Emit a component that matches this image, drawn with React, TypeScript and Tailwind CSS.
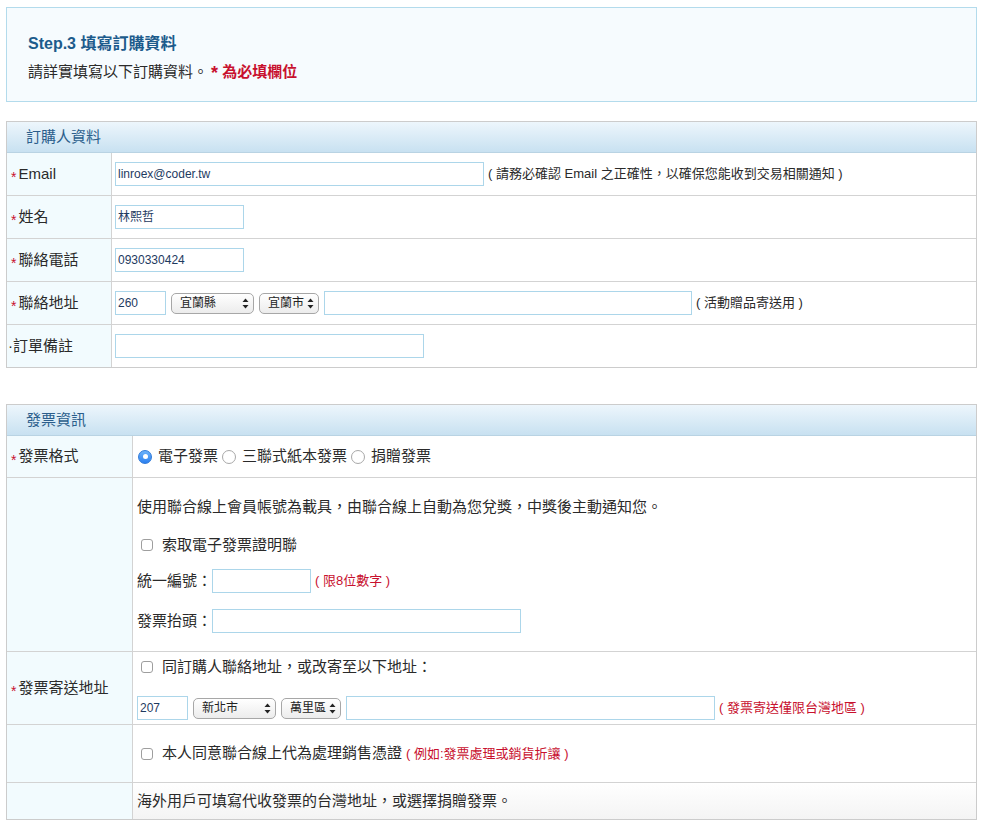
import React from "react";

const Star = () => <span className="text-[#c8102e] text-[14px] leading-none mr-[2px] relative top-[3px]">*</span>;

function Arrows() {
  return (
    <svg width="7" height="11" viewBox="0 0 7 11" className="shrink-0">
      <path d="M3.5 0.5 L6.5 4 L0.5 4 Z" fill="#222" />
      <path d="M3.5 10.5 L6.5 7 L0.5 7 Z" fill="#222" />
    </svg>
  );
}

function Sel({ text, className }: { text: string; className: string }) {
  return (
    <div
      className={
        "h-[21px] rounded-[5px] border border-[#a7a7a7] bg-gradient-to-b from-white to-[#ececec] flex items-center justify-between pl-[8px] pr-[4px] text-[12px] text-[#222] shrink-0 " +
        className
      }
    >
      <span>{text}</span>
      <Arrows />
    </div>
  );
}

function Inp({ value, className }: { value?: string; className: string }) {
  return (
    <div
      className={
        "h-[24px] border border-[#acd6ea] bg-white flex items-center px-[2px] text-[12px] text-[#1e3a5f] shrink-0 " +
        className
      }
    >
      {value}
    </div>
  );
}

function Check() {
  return <span className="inline-block w-[12px] h-[12px] rounded-[3px] border border-[#9e9e9e] bg-white mr-[9px] shrink-0" />;
}

function Radio({ on }: { on?: boolean }) {
  return on ? (
    <span className="inline-flex items-center justify-center w-[14px] h-[14px] rounded-full bg-gradient-to-b from-[#6cb3fa] to-[#2a7ff0] border border-[#2f7ad9] mr-[6px] shrink-0">
      <span className="w-[5px] h-[5px] rounded-full bg-white" />
    </span>
  ) : (
    <span className="inline-block w-[14px] h-[14px] rounded-full border border-[#a8a8a8] bg-white mr-[6px] shrink-0" />
  );
}

function Header({ title }: { title: string }) {
  return (
    <div className="h-[31px] bg-gradient-to-b from-[#edf6fc] to-[#c8e1f1] border-b border-[#b9d3e3] flex items-center pl-[19px] text-[15px] text-[#2b5e8c]">
      {title}
    </div>
  );
}

export default function App() {
  return (
    <div className="w-[983px] h-[825px] bg-white px-[6px] pt-[7px] font-['Liberation_Sans','Noto_Sans_CJK_TC',sans-serif] text-[#2a2a2a] overflow-hidden">
      {/* Step box */}
      <div className="h-[95px] border border-[#b3dbec] bg-[#f6fbfe] pl-[21px] pt-[26px]">
        <div className="text-[16px] font-bold text-[#1c5b8c] leading-[20px]">Step.3 填寫訂購資料</div>
        <div className="text-[15px] leading-[20px] mt-[7px]">
          請詳實填寫以下訂購資料。
          <span className="text-[#c8102e] font-bold ml-[3px]">
            <span className="text-[18px] relative top-[2px]">*</span> 為必填欄位
          </span>
        </div>
      </div>

      {/* Section 1 */}
      <div className="mt-[19px] border border-[#cccccc]">
        <Header title="訂購人資料" />
        <div className="grid grid-cols-[105px_1fr] text-[15px]">
          <div className="h-[43px] bg-[#f2fbfe] border-r border-b border-[#d3d3d3] flex items-center pl-[4px]">
            <Star />Email
          </div>
          <div className="h-[43px] border-b border-[#d3d3d3] flex items-center pl-[3px]">
            <Inp value="linroex@coder.tw" className="w-[369px]" />
            <span className="text-[13px] ml-[4px]">( 請務必確認 Email 之正確性，以確保您能收到交易相關通知 )</span>
          </div>

          <div className="h-[43px] bg-[#f2fbfe] border-r border-b border-[#d3d3d3] flex items-center pl-[4px]">
            <Star />姓名
          </div>
          <div className="h-[43px] border-b border-[#d3d3d3] flex items-center pl-[3px]">
            <Inp value="林熙哲" className="w-[129px]" />
          </div>

          <div className="h-[43px] bg-[#f2fbfe] border-r border-b border-[#d3d3d3] flex items-center pl-[4px]">
            <Star />聯絡電話
          </div>
          <div className="h-[43px] border-b border-[#d3d3d3] flex items-center pl-[3px]">
            <Inp value="0930330424" className="w-[129px]" />
          </div>

          <div className="h-[43px] bg-[#f2fbfe] border-r border-b border-[#d3d3d3] flex items-center pl-[4px]">
            <Star />聯絡地址
          </div>
          <div className="h-[43px] border-b border-[#d3d3d3] flex items-center pl-[3px] gap-[5px]">
            <Inp value="260" className="w-[51px]" />
            <Sel text="宜蘭縣" className="w-[83px]" />
            <Sel text="宜蘭市" className="w-[60px]" />
            <Inp className="w-[368px]" />
            <span className="text-[13px] -ml-[1px]">( 活動贈品寄送用 )</span>
          </div>

          <div className="h-[42px] bg-[#f2fbfe] border-r border-[#d3d3d3] flex items-center pl-[1px]">
            ·訂單備註
          </div>
          <div className="h-[42px] flex items-center pl-[3px]">
            <Inp className="w-[309px]" />
          </div>
        </div>
      </div>

      {/* Section 2 */}
      <div className="mt-[36px] border border-[#cccccc]">
        <Header title="發票資訊" />
        <div className="grid grid-cols-[126px_1fr] text-[15px]">
          <div className="h-[42px] bg-[#f2fbfe] border-r border-b border-[#d3d3d3] flex items-center pl-[4px]">
            <Star />發票格式
          </div>
          <div className="h-[42px] border-b border-[#d3d3d3] flex items-center pl-[5px]">
            <Radio on />
            <span className="mr-[4px]">電子發票</span>
            <Radio />
            <span className="mr-[4px]">三聯式紙本發票</span>
            <Radio />
            <span>捐贈發票</span>
          </div>

          <div className="h-[174px] bg-[#f2fbfe] border-r border-b border-[#d3d3d3]" />
          <div className="h-[174px] border-b border-[#d3d3d3] pl-[4px] pt-[19px] flex flex-col">
            <div className="h-[20px] leading-[20px]">使用聯合線上會員帳號為載具，由聯合線上自動為您兌獎，中獎後主動通知您。</div>
            <div className="h-[20px] mt-[18px] flex items-center pl-[4px]">
              <Check />索取電子發票證明聯
            </div>
            <div className="h-[24px] mt-[14px] flex items-center">
              <span>統一編號：</span>
              <Inp className="w-[99px]" />
              <span className="text-[13px] text-[#c8102e] ml-[4px]">( 限8位數字 )</span>
            </div>
            <div className="h-[24px] mt-[16px] flex items-center">
              <span>發票抬頭：</span>
              <Inp className="w-[309px]" />
            </div>
          </div>

          <div className="h-[73px] bg-[#f2fbfe] border-r border-b border-[#d3d3d3] flex items-center pl-[4px]">
            <Star />發票寄送地址
          </div>
          <div className="h-[73px] border-b border-[#d3d3d3] pl-[4px] pt-[5px] flex flex-col">
            <div className="h-[20px] flex items-center pl-[4px]">
              <Check />同訂購人聯絡地址，或改寄至以下地址：
            </div>
            <div className="h-[24px] mt-[19px] flex items-center gap-[5px]">
              <Inp value="207" className="w-[51px]" />
              <Sel text="新北市" className="w-[83px]" />
              <Sel text="萬里區" className="w-[60px]" />
              <Inp className="w-[369px]" />
              <span className="text-[13px] text-[#c8102e] -ml-[1px]">( 發票寄送僅限台灣地區 )</span>
            </div>
          </div>

          <div className="h-[58px] bg-[#f2fbfe] border-r border-b border-[#d3d3d3]" />
          <div className="h-[58px] border-b border-[#d3d3d3] pl-[8px] flex items-center">
            <Check />本人同意聯合線上代為處理銷售憑證
            <span className="text-[13px] text-[#c8102e] ml-[4px]">( 例如:發票處理或銷貨折讓 )</span>
          </div>

          <div className="h-[36px] bg-[#f2fbfe] border-r border-[#d3d3d3]" />
          <div className="h-[36px] pl-[4px] flex items-center bg-gradient-to-b from-white to-[#f4f4f4]">
            海外用戶可填寫代收發票的台灣地址，或選擇捐贈發票。
          </div>
        </div>
      </div>
    </div>
  );
}
